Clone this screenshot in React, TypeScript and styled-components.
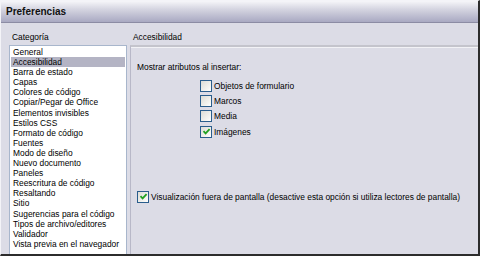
import React from "react";
import styled, { createGlobalStyle } from "styled-components";

const categories = [
  "General",
  "Accesibilidad",
  "Barra de estado",
  "Capas",
  "Colores de código",
  "Copiar/Pegar de Office",
  "Elementos invisibles",
  "Estilos CSS",
  "Formato de código",
  "Fuentes",
  "Modo de diseño",
  "Nuevo documento",
  "Paneles",
  "Reescritura de código",
  "Resaltando",
  "Sitio",
  "Sugerencias para el código",
  "Tipos de archivo/editores",
  "Validador",
  "Vista previa en el navegador",
];

const attributes = [
  { label: "Objetos de formulario", checked: false },
  { label: "Marcos", checked: false },
  { label: "Media", checked: false },
  { label: "Imágenes", checked: true },
];

export default function App() {
  return (
    <>
      <GlobalStyle />
      <Window>
        <TitleBar>Preferencias</TitleBar>
        <Body>
          <Side>
            <Heading>Categoría</Heading>
            <CategoryList>
              {categories.map((c) => (
                <Item key={c} $selected={c === "Accesibilidad"}>
                  {c}
                </Item>
              ))}
            </CategoryList>
          </Side>
          <Main>
            <Heading>Accesibilidad</Heading>
            <Panel>
              <Label>Mostrar atributos al insertar:</Label>
              <Options>
                {attributes.map((a) => (
                  <CheckRow key={a.label}>
                    <CheckBox checked={a.checked} />
                    <span>{a.label}</span>
                  </CheckRow>
                ))}
              </Options>
              <OffscreenRow>
                <CheckBox checked />
                <span>
                  Visualización fuera de pantalla (desactive esta opción si
                  utiliza lectores de pantalla)
                </span>
              </OffscreenRow>
            </Panel>
          </Main>
        </Body>
      </Window>
    </>
  );
}

function CheckBox({ checked }: { checked?: boolean }) {
  return (
    <Box>
      {checked && (
        <svg width="9" height="9" viewBox="0 0 9 9">
          <path
            d="M1.5 4.2 L3.6 6.4 L7.6 2.2"
            fill="none"
            stroke="#21a121"
            strokeWidth="1.8"
          />
        </svg>
      )}
    </Box>
  );
}

const GlobalStyle = createGlobalStyle`
  html, body {
    margin: 0;
    padding: 0;
    background: #dcdce6;
  }
  * {
    box-sizing: border-box;
  }
`;

const Window = styled.div`
  width: 480px;
  height: 256px;
  overflow: hidden;
  display: flex;
  flex-direction: column;
  background: #dcdce6;
  border-top: 1px solid #f4f4f8;
  border-left: 1px solid #f4f4f8;
  border-right: 2px solid #2c2c2c;
  border-bottom: 2px solid #2c2c2c;
  font-family: "Liberation Sans", Arial, sans-serif;
  font-size: 8.4px;
  color: #000;
`;

const TitleBar = styled.div`
  height: 22px;
  flex-shrink: 0;
  display: flex;
  align-items: center;
  padding-left: 5px;
  font-weight: bold;
  font-size: 10px;
  color: #111;
  background: linear-gradient(#f6f6f9 0%, #d4d4e0 40%, #a9a9c2 100%);
  border-bottom: 1px solid #8c8ca4;
`;

const Body = styled.div`
  flex: 1;
  display: grid;
  grid-template-columns: 129px 1fr;
  padding-top: 6px;
  min-height: 0;
`;

const Side = styled.div`
  display: flex;
  flex-direction: column;
  padding-left: 8px;
`;

const Main = styled.div`
  display: flex;
  flex-direction: column;
`;

const Heading = styled.div`
  height: 16px;
  line-height: 16px;
  padding-left: 3px;
  white-space: nowrap;
`;

const CategoryList = styled.div`
  width: 118px;
  height: 240px;
  flex-shrink: 0;
  background: #fff;
  border: 1px solid #a8b6cc;
  padding: 1px 1px;
`;

const Item = styled.div<{ $selected?: boolean }>`
  height: 10.1px;
  line-height: 10.1px;
  padding-left: 2px;
  white-space: nowrap;
  background: ${(p) => (p.$selected ? "#b4b4c4" : "transparent")};
`;

const Panel = styled.div`
  flex: 1;
  border-top: 2px solid #c4c4cc;
  border-left: 1px solid #b8b8c8;
  padding-left: 6px;
  padding-top: 14px;
  box-shadow: inset 0 1px 0 #f2f2f6;
`;

const Label = styled.div`
  height: 12px;
  line-height: 12px;
  white-space: nowrap;
`;

const Options = styled.div`
  display: flex;
  flex-direction: column;
  padding-left: 63px;
  margin-top: 5px;
`;

const CheckRow = styled.div`
  height: 15.3px;
  display: flex;
  align-items: center;
  gap: 2px;
  white-space: nowrap;
`;

const OffscreenRow = styled(CheckRow)`
  margin-top: 50px;
`;

const Box = styled.span`
  width: 12px;
  height: 12px;
  flex-shrink: 0;
  display: inline-flex;
  align-items: center;
  justify-content: center;
  border: 1px solid #2a5d8c;
  background: linear-gradient(135deg, #dcdcd6 0%, #f4f4f0 70%, #ffffff 100%);
`;
